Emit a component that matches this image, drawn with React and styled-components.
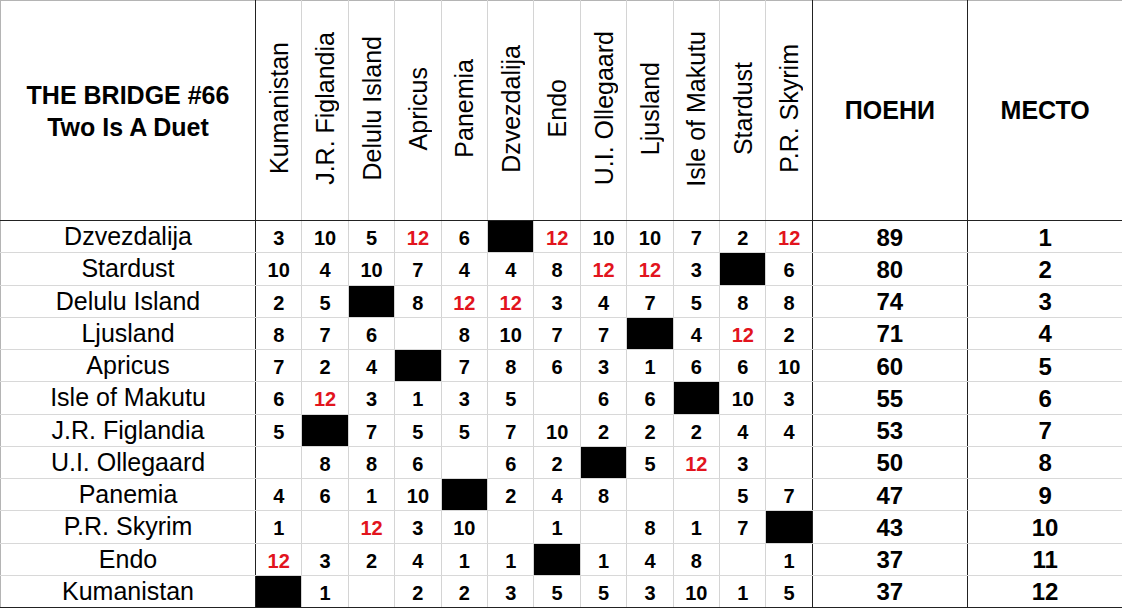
import styled, { createGlobalStyle } from 'styled-components';

const GlobalStyle = createGlobalStyle`
  html, body {
    margin: 0;
    padding: 0;
    background: #ffffff;
  }
  body {
    font-family: "Liberation Sans", Arial, sans-serif;
    color: #000000;
  }
`;

const countries = [
  'Kumanistan',
  'J.R. Figlandia',
  'Delulu Island',
  'Apricus',
  'Panemia',
  'Dzvezdalija',
  'Endo',
  'U.I. Ollegaard',
  'Ljusland',
  'Isle of Makutu',
  'Stardust',
  'P.R. Skyrim',
];

// X = own country (black cell), '' = no points
const results = [
  ['Dzvezdalija', [3, 10, 5, 12, 6, 'X', 12, 10, 10, 7, 2, 12], 89, 1],
  ['Stardust', [10, 4, 10, 7, 4, 4, 8, 12, 12, 3, 'X', 6], 80, 2],
  ['Delulu Island', [2, 5, 'X', 8, 12, 12, 3, 4, 7, 5, 8, 8], 74, 3],
  ['Ljusland', [8, 7, 6, '', 8, 10, 7, 7, 'X', 4, 12, 2], 71, 4],
  ['Apricus', [7, 2, 4, 'X', 7, 8, 6, 3, 1, 6, 6, 10], 60, 5],
  ['Isle of Makutu', [6, 12, 3, 1, 3, 5, '', 6, 6, 'X', 10, 3], 55, 6],
  ['J.R. Figlandia', [5, 'X', 7, 5, 5, 7, 10, 2, 2, 2, 4, 4], 53, 7],
  ['U.I. Ollegaard', ['', 8, 8, 6, '', 6, 2, 'X', 5, 12, 3, ''], 50, 8],
  ['Panemia', [4, 6, 1, 10, 'X', 2, 4, 8, '', '', 5, 7], 47, 9],
  ['P.R. Skyrim', [1, '', 12, 3, 10, '', 1, '', 8, 1, 7, 'X'], 43, 10],
  ['Endo', [12, 3, 2, 4, 1, 1, 'X', 1, 4, 8, '', 1], 37, 11],
  ['Kumanistan', ['X', 1, '', 2, 2, 3, 5, 5, 3, 10, 1, 5], 37, 12],
];

function App() {
  return (
    <>
      <GlobalStyle />
      <Table>
        <colgroup>
          <col style={{ width: 255 }} />
          {countries.map((c) => (
            <col key={c} style={{ width: 46.42 }} />
          ))}
          <col style={{ width: 155 }} />
          <col style={{ width: 155 }} />
        </colgroup>
        <thead>
          <tr>
            <TitleCell>
              THE BRIDGE #66
              <br />
              Two Is A Duet
            </TitleCell>
            {countries.map((c, i) => (
              <VoterCell key={c} $first={i === 0}>
                <Rotated>{c}</Rotated>
              </VoterCell>
            ))}
            <TotalHead $divider>ПОЕНИ</TotalHead>
            <TotalHead $divider>МЕСТО</TotalHead>
          </tr>
        </thead>
        <tbody>
          {results.map(([name, votes, points, place]) => (
            <Row key={name}>
              <NameCell>{name}</NameCell>
              {votes.map((v, i) =>
                v === 'X' ? (
                  <BlockedCell key={i} $first={i === 0} />
                ) : (
                  <ScoreCell key={i} $first={i === 0} $top={v === 12}>
                    {v}
                  </ScoreCell>
                )
              )}
              <TotalCell>{points}</TotalCell>
              <TotalCell>{place}</TotalCell>
            </Row>
          ))}
        </tbody>
      </Table>
    </>
  );
}

export default App;

const Table = styled.table`
  width: 1122px;
  table-layout: fixed;
  border-collapse: collapse;
  border-top: 1px solid #b4b4b4;
  border-left: 1px solid #b4b4b4;
  border-bottom: 1px solid #222;
`;

const TitleCell = styled.th`
  height: 219px;
  padding: 0;
  font-size: 25px;
  line-height: 32px;
  font-weight: bold;
  text-align: center;
  vertical-align: middle;
  border-right: 1px solid #222;
  border-bottom: 1px solid #222;
`;

const VoterCell = styled.th`
  padding: 0;
  font-weight: normal;
  text-align: center;
  vertical-align: middle;
  border-left: 1px solid ${(p) => (p.$first ? '#222' : '#d4d4d4')};
  border-bottom: 1px solid #222;
`;

const Rotated = styled.div`
  display: inline-block;
  writing-mode: vertical-rl;
  transform: rotate(180deg);
  font-size: 25px;
  line-height: 30px;
  white-space: nowrap;
`;

const TotalHead = styled.th`
  padding: 0;
  font-size: 25px;
  font-weight: bold;
  text-align: center;
  vertical-align: middle;
  border-left: 1px solid #222;
  border-bottom: 1px solid #222;
`;

const Row = styled.tr`
  height: 32.25px;

  > td {
    border-bottom: 1px solid #d8d8d8;
  }

  &:last-child > td {
    border-bottom: 1px solid #222;
  }
`;

const NameCell = styled.td`
  padding: 0;
  font-size: 25px;
  line-height: 1;
  text-align: center;
  vertical-align: middle;
  border-right: 1px solid #222;
`;

const ScoreCell = styled.td`
  padding: 3px 0 0;
  font-size: 20px;
  line-height: 1;
  font-weight: bold;
  text-align: center;
  vertical-align: middle;
  color: ${(p) => (p.$top ? '#e2141d' : '#000')};
  border-left: 1px solid ${(p) => (p.$first ? '#222' : '#d4d4d4')};
`;

const BlockedCell = styled.td`
  padding: 0;
  background: #000;
  border-left: 1px solid ${(p) => (p.$first ? '#222' : '#d4d4d4')};
`;

const TotalCell = styled.td`
  padding: 2px 0 0;
  font-size: 24px;
  line-height: 1;
  font-weight: bold;
  text-align: center;
  vertical-align: middle;
  border-left: 1px solid #222;
`;
